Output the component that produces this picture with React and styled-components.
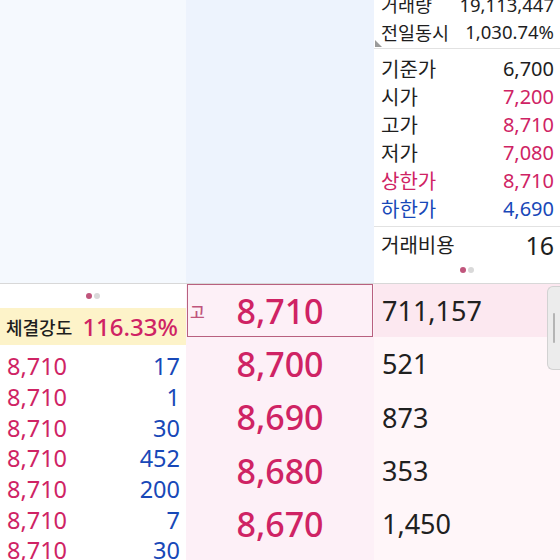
import React from 'react';
import styled, { createGlobalStyle } from 'styled-components';

const GlobalStyle = createGlobalStyle`
  html, body {
    margin: 0;
    padding: 0;
    background: #ffffff;
  }
  body {
    font-family: "Noto Sans", "Noto Sans CJK KR", sans-serif;
    color: #1e1e1e;
  }
`;

const PINK = '#cf2364';
const BLUE = '#1848b8';

const Screen = styled.div`
  width: 560px;
  height: 560px;
  overflow: hidden;
  display: flex;
  flex-direction: column;
`;

const Grid = styled.div`
  display: grid;
  grid-template-columns: 186px 188px 186px;
  height: ${p => p.h}px;
  overflow: hidden;
`;

const TopGrid = styled(Grid)`
  border-bottom: 1px solid #d8d8d8;
`;

const Pane = styled.div`
  background: ${p => p.bg || '#ffffff'};
  overflow: hidden;
  display: flex;
  flex-direction: column;
  position: relative;

  & > * {
    flex-shrink: 0;
  }
`;

const InfoBlock = styled.div`
  position: relative;
  display: flex;
  flex-direction: column;
  padding: ${p => p.pad || '0'};
  border-bottom: ${p => (p.line ? '1px solid #e2e2e2' : 'none')};
  margin-top: ${p => p.mt || 0}px;
`;

const InfoRow = styled.div`
  display: flex;
  align-items: center;
  justify-content: space-between;
  height: ${p => p.h || 28}px;
  padding: 0 6px 0 7px;
  font-size: ${p => p.size || 20}px;
  white-space: nowrap;
`;

const Label = styled.span`
  color: ${p => p.c || '#1e1e1e'};
`;

const Value = styled.span`
  color: ${p => p.c || '#1e1e1e'};
  font-size: ${p => (p.size ? `${p.size}px` : 'inherit')};
`;

const Corner = styled.div`
  position: absolute;
  left: 1px;
  bottom: 1px;
  width: 0;
  height: 0;
  border-left: 7px solid #9a9a9a;
  border-top: 7px solid transparent;
`;

const Dots = styled.div`
  display: flex;
  justify-content: center;
  align-items: center;
  gap: 2px;
  height: ${p => p.h || 24}px;
`;

const Dot = styled.span`
  width: 6px;
  height: 6px;
  border-radius: 50%;
  background: ${p => (p.on ? '#c0557c' : '#d9d9d9')};
`;

const Strength = styled.div`
  display: flex;
  align-items: center;
  justify-content: space-between;
  height: 37px;
  background: #fdf3c9;
  padding: 0 8px 0 6px;
  margin-bottom: 6px;
  white-space: nowrap;
`;

const StrengthLabel = styled.span`
  font-size: 18px;
  font-weight: 500;
  color: #1e1e1e;
`;

const StrengthValue = styled.span`
  font-size: 24px;
  font-weight: 500;
  color: ${PINK};
`;

const TradeRow = styled.div`
  display: flex;
  align-items: center;
  justify-content: space-between;
  height: 30.7px;
  padding: 0 6px 0 7px;
  font-size: 23.5px;
`;

const TradePrice = styled.span`
  color: ${PINK};
`;

const TradeQty = styled.span`
  color: ${BLUE};
`;

const PriceRow = styled.div`
  position: relative;
  display: flex;
  align-items: center;
  justify-content: center;
  height: 53.3px;
  box-sizing: border-box;
  border: ${p => (p.sel ? `1.5px solid #b8607f` : '1.5px solid transparent')};
  margin: 0 1px;
  font-size: 34px;
  font-weight: 500;
  color: ${PINK};
`;

const HighTag = styled.span`
  position: absolute;
  left: 2px;
  top: 50%;
  transform: translateY(-50%);
  font-size: 16px;
  font-weight: 500;
  color: #c0557c;
`;

const QtyRow = styled.div`
  display: flex;
  align-items: center;
  height: 53.3px;
  padding-left: 8px;
  font-size: 27px;
  color: #202020;
  background: ${p => (p.hi ? '#fce8f0' : 'transparent')};
`;

const ScrollHandle = styled.div`
  position: absolute;
  right: 0;
  top: 2px;
  width: 12px;
  height: 82px;
  background: #ececec;
  border: 1px solid #d2d2d2;
  border-right: none;
  border-radius: 6px 0 0 6px;
  display: flex;
  align-items: center;
  justify-content: center;

  &::after {
    content: '';
    width: 2px;
    height: 30px;
    background: #b5b5b5;
    border-radius: 1px;
  }
`;

const info = [
  { label: '기준가', value: '6,700' },
  { label: '시가', value: '7,200', vc: PINK },
  { label: '고가', value: '8,710', vc: PINK },
  { label: '저가', value: '7,080', vc: PINK },
  { label: '상한가', value: '8,710', lc: PINK, vc: PINK },
  { label: '하한가', value: '4,690', lc: BLUE, vc: BLUE },
];

const trades = [17, 1, 30, 452, 200, 7, 30];

const book = [
  { price: '8,710', qty: '711,157', sel: true },
  { price: '8,700', qty: '521' },
  { price: '8,690', qty: '873' },
  { price: '8,680', qty: '353' },
  { price: '8,670', qty: '1,450' },
];

export default function App() {
  return (
    <Screen>
      <GlobalStyle />
      <TopGrid h={283}>
        <Pane bg="#f5f9fe" />
        <Pane bg="#edf3fd" />
        <Pane>
          <InfoBlock mt={-10} pad="0 0 3px" line>
            <InfoRow h={28} size={18.5}>
              <Label>거래량</Label>
              <Value>19,113,447</Value>
            </InfoRow>
            <InfoRow h={27} size={18.5}>
              <Label>전일동시</Label>
              <Value>1,030.74%</Value>
            </InfoRow>
            <Corner />
          </InfoBlock>
          <InfoBlock pad="5px 0 4px" line>
            {info.map(r => (
              <InfoRow key={r.label}>
                <Label c={r.lc}>{r.label}</Label>
                <Value c={r.vc}>{r.value}</Value>
              </InfoRow>
            ))}
          </InfoBlock>
          <InfoRow h={35}>
            <Label>거래비용</Label>
            <Value size={25}>16</Value>
          </InfoRow>
          <Dots h={16}>
            <Dot on />
            <Dot />
          </Dots>
        </Pane>
      </TopGrid>
      <Grid h={276}>
        <Pane>
          <Dots h={24}>
            <Dot on />
            <Dot />
          </Dots>
          <Strength>
            <StrengthLabel>체결강도</StrengthLabel>
            <StrengthValue>116.33%</StrengthValue>
          </Strength>
          {trades.map((q, i) => (
            <TradeRow key={i}>
              <TradePrice>8,710</TradePrice>
              <TradeQty>{q}</TradeQty>
            </TradeRow>
          ))}
        </Pane>
        <Pane bg="#fdf0f7">
          {book.map(b => (
            <PriceRow key={b.price} sel={b.sel}>
              {b.sel && <HighTag>고</HighTag>}
              {b.price}
            </PriceRow>
          ))}
        </Pane>
        <Pane bg="#fff6f9">
          {book.map((b, i) => (
            <QtyRow key={b.price} hi={i === 0}>
              {b.qty}
            </QtyRow>
          ))}
          <ScrollHandle />
        </Pane>
      </Grid>
    </Screen>
  );
}
